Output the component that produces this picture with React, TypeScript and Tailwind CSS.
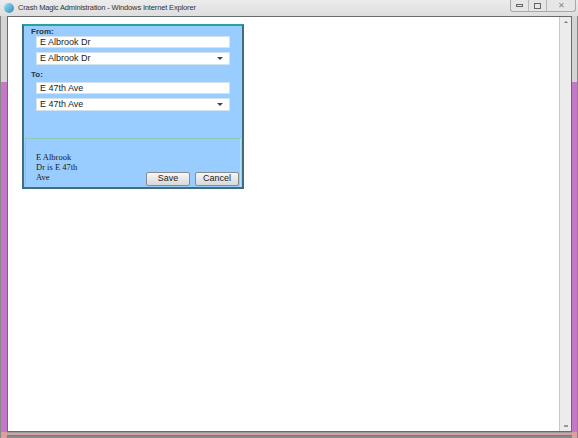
import React from 'react';

const sans = { fontFamily: '"Liberation Sans", Arial, sans-serif' };

const Field = ({ value, select }: { value: string; select?: boolean }) => (
  <div
    className={`ml-[12px] mr-[12px] ${select ? 'h-[13px]' : 'h-[12px]'} bg-white border border-[#d4e2f0] flex items-center pl-[3px] pr-[6px] text-[9px] leading-none text-[#222]`}
    style={sans}
  >
    <span className="flex-1">{value}</span>
    {select && <span className="w-0 h-0 border-l-[3px] border-r-[3px] border-t-[3px] border-l-transparent border-r-transparent border-t-[#444]" />}
  </div>
);

const Btn = ({ label }: { label: string }) => (
  <div
    className="w-[44px] h-[14px] border border-[#8a8a8a] rounded-[2px] bg-gradient-to-b from-[#f6f6f6] to-[#d8d8d8] flex items-center justify-center text-[9px] text-[#222]"
    style={sans}
  >
    {label}
  </div>
);

export default function App() {
  return (
    <div className="w-[578px] h-[438px] bg-[#dedede] flex flex-col overflow-hidden" style={sans}>
      {/* title bar */}
      <div className="h-[16px] flex items-start shrink-0 bg-gradient-to-b from-[#ececec] to-[#dedede]">
        <div className="w-[10px] h-[10px] mt-[3px] ml-[4px] rounded-full bg-gradient-to-br from-[#9ee3f5] to-[#2a8bb8]" />
        <span className="ml-[4px] mt-[3px] text-[7.5px] leading-[10px] tracking-[-0.15px] text-[#333]">
          Crash Magic Administration - Windows Internet Explorer
        </span>
        <div className="flex-1" />
        <div className="flex h-[12px] mr-[2px] border border-[#a8a8a8] border-t-0 rounded-b-[3px] bg-[#e6e6e6]">
          <div className="w-[18px] flex items-center justify-center border-r border-[#b8b8b8]">
            <div className="w-[7px] h-[3px] border border-[#666]" />
          </div>
          <div className="w-[18px] flex items-center justify-center border-r border-[#b8b8b8]">
            <div className="w-[7px] h-[6px] border border-[#666]" />
          </div>
          <div className="w-[28px] flex items-center justify-center text-[8px] text-[#888]">✕</div>
        </div>
      </div>

      <div className="flex flex-1 min-h-0">
        {/* left frame */}
        <div className="w-[7px] flex flex-col border-l border-[#888]">
          <div className="h-[66px] bg-[#d4d4d4]" />
          <div className="flex-1 bg-[#c678c8]" />
          <div className="h-[6px] bg-[#d8a0a0]" />
        </div>
        <div className="flex-1 flex flex-col">
          <div className="flex-1 flex border border-[#6a6a6a] min-h-0">
            {/* page */}
            <div className="flex-1 bg-white pl-[14px] pt-[7px]">
              <div className="w-[222px] h-[165px] border-2 border-[#3f6f7f] border-t-[#2aa0a0] bg-[#99ccff] flex flex-col">
                <div className="h-[10px] pt-[1px] text-[8px] leading-[9px] font-bold text-[#2a3440] pl-[7px]">From:</div>
                <Field value="E Albrook Dr" />
                <div className="h-[4px] shrink-0" />
                <Field value="E Albrook Dr" select />
                <div className="h-[17px] pt-[5px] text-[8px] leading-[9px] font-bold text-[#2a3440] pl-[7px]">To:</div>
                <Field value="E 47th Ave" />
                <div className="h-[4px] shrink-0" />
                <Field value="E 47th Ave" select />
                <div className="h-[27px] shrink-0" />
                <div className="flex-1 mx-[1px] border-t border-l border-[#8cc8bc] border-r border-r-[#b8e0ff] flex items-end justify-between pb-[1px] pr-[1px]">
                  <div
                    className="pl-[10px] pb-[4px] text-[8.5px] leading-[10px] text-[#1a1a1a] whitespace-nowrap"
                    style={{ fontFamily: '"Liberation Serif", serif' }}
                  >
                    E Albrook
                    <br />
                    Dr is E 47th
                    <br />
                    Ave
                  </div>
                  <div className="flex gap-[5px]">
                    <Btn label="Save" />
                    <Btn label="Cancel" />
                  </div>
                </div>
              </div>
            </div>
            {/* scrollbar */}
            <div className="w-[12px] bg-[#ececec] border-l border-[#c8c8c8] flex flex-col items-center justify-between py-[4px]">
              <div className="w-0 h-0 border-l-[2px] border-r-[2px] border-b-[2px] border-l-transparent border-r-transparent border-b-[#777]" />
              <div className="w-[4px] h-[2px] bg-[#999]" />
            </div>
          </div>
          <div className="h-[6px] flex flex-col">
            <div className="h-[1px] bg-[#9a9a9a]" />
            <div className="h-[2px] bg-[#d8a0a0]" />
            <div className="h-[1px] bg-[#b06060]" />
            <div className="flex-1 bg-[#888]" />
          </div>
        </div>
        {/* right frame */}
        <div className="w-[6px] flex flex-col border-r border-[#888]">
          <div className="h-[66px] bg-[#d4d4d4]" />
          <div className="flex-1 bg-[#c678c8]" />
          <div className="h-[6px] bg-[#d8a0a0]" />
        </div>
      </div>
    </div>
  );
}
